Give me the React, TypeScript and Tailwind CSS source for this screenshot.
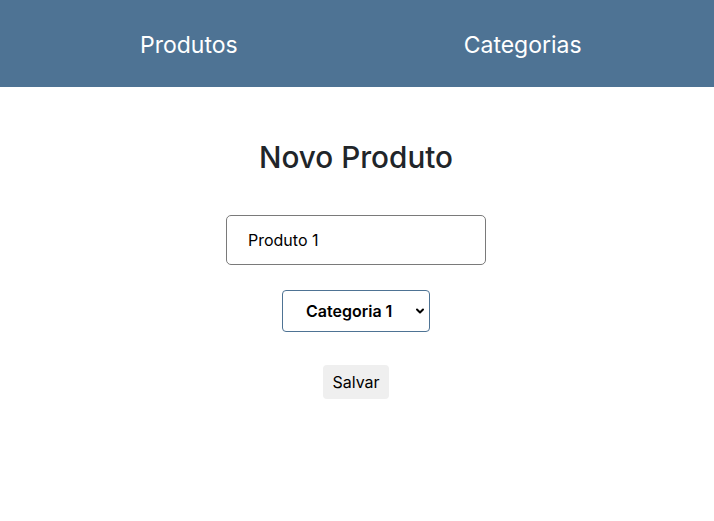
import { useState } from 'react';

export default function App() {
  const [name, setName] = useState('Produto 1');
  const [category, setCategory] = useState('1');

  return (
    <div className="min-h-[521px] bg-white font-['Inter',sans-serif] text-[#212529]">
      {/* Top nav */}
      <nav className="h-[87px] bg-[#4e7394] flex items-center pt-[4px] pl-[140px] gap-[226px]">
        <a href="#" className="text-white text-[23px] leading-none">Produtos</a>
        <a href="#" className="text-white text-[23px] leading-none">Categorias</a>
      </nav>

      {/* Form */}
      <main className="flex flex-col items-center pr-[2px]">
        <h1 className="mt-[50px] text-[29.7px] font-medium leading-[40px]">Novo Produto</h1>
        <input
          value={name}
          onChange={(e) => setName(e.target.value)}
          className="mt-[38px] w-[260px] h-[50px] border border-[#7a7a7a] rounded-[5px] px-[21px] text-base text-black outline-none"
        />
        <div className="relative mt-[25px]">
          <select
            value={category}
            onChange={(e) => setCategory(e.target.value)}
            className="appearance-none w-[148px] h-[42px] border border-[#4e7394] rounded-[4px] pl-[23px] pr-[30px] text-base font-semibold text-black bg-white outline-none"
          >
            <option value="1">Categoria 1</option>
            <option value="2">Categoria 2</option>
          </select>
          <svg
            className="absolute right-[5px] top-[16px] pointer-events-none"
            width="10"
            height="10"
            viewBox="0 0 10 10"
            fill="none"
            stroke="black"
            strokeWidth="2"
            strokeLinecap="round"
            strokeLinejoin="round"
          >
            <path d="M2 3.5 L5 6.5 L8 3.5" />
          </svg>
        </div>
        <button className="mt-[33px] h-[34px] px-[9px] bg-[#efefef] rounded-[4px] text-base text-black">
          Salvar
        </button>
      </main>
    </div>
  );
}
